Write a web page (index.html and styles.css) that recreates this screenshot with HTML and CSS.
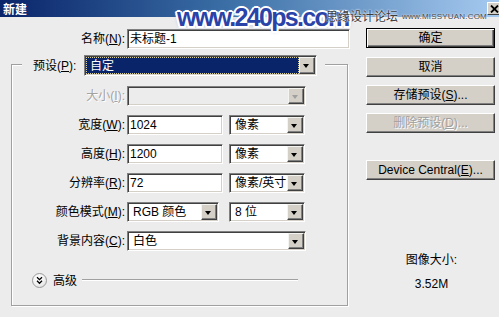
FILE: index.html
```html
<!DOCTYPE html>
<html lang="zh-CN">
<head>
<meta charset="utf-8">
<title>新建</title>
<link rel="stylesheet" href="styles.css">
</head>
<body>
<div class="dialog">
  <div class="titlebar">
    <span class="title">新建</span>
    <span class="close"><svg width="9" height="8" viewBox="0 0 9 8"><path d="M1 0.5 L8 7.5 M8 0.5 L1 7.5" stroke="#000" stroke-width="1.8" fill="none"/></svg></span>
  </div>
  <div class="wm wm-main">www.240ps.com</div>
  <div class="wm wm-cn">思缘设计论坛</div>
  <div class="wm wm-en">www.MISSYUAN.COM</div>
  <div class="main">
    <div class="left">
      <div class="name-row">
        <span class="lbl lbl-name">名称(<u>N</u>):</span>
        <div class="field input w-name"><span class="val">未标题-1</span></div>
      </div>
      <div class="group">
        <div class="legend">
          <span class="legend-lbl">预设(<u>P</u>):</span>
          <div class="field select w-preset"><span class="val selected">自定</span><span class="arrow"></span></div>
        </div>
        <div class="row first">
          <span class="lbl disabled">大小(<u>I</u>):</span>
          <div class="field select disabled w-full"><span class="val"></span><span class="arrow"></span></div>
        </div>
        <div class="row">
          <span class="lbl">宽度(<u>W</u>):</span>
          <div class="field input w-num"><span class="val">1024</span></div>
          <div class="field select w-unit"><span class="val">像素</span><span class="arrow"></span></div>
        </div>
        <div class="row">
          <span class="lbl">高度(<u>H</u>):</span>
          <div class="field input w-num"><span class="val">1200</span></div>
          <div class="field select w-unit"><span class="val">像素</span><span class="arrow"></span></div>
        </div>
        <div class="row">
          <span class="lbl">分辨率(<u>R</u>):</span>
          <div class="field input w-num"><span class="val">72</span></div>
          <div class="field select w-unit"><span class="val">像素/英寸</span><span class="arrow"></span></div>
        </div>
        <div class="row">
          <span class="lbl">颜色模式(<u>M</u>):</span>
          <div class="field select w-mode"><span class="val">RGB 颜色</span><span class="arrow"></span></div>
          <div class="field select w-unit w-bits"><span class="val">8 位</span><span class="arrow"></span></div>
        </div>
        <div class="row">
          <span class="lbl">背景内容(<u>C</u>):</span>
          <div class="field select w-full"><span class="val">白色</span><span class="arrow"></span></div>
        </div>
        <div class="adv-row">
          <span class="adv-btn"><svg width="9" height="9" viewBox="0 0 9 9"><path d="M2 1.2 L4.5 3.7 L7 1.2 M2 4.8 L4.5 7.3 L7 4.8" stroke="#000" stroke-width="1.3" fill="none"/></svg></span>
          <span class="adv-lbl">高级</span>
          <span class="adv-line"></span>
        </div>
      </div>
    </div>
    <div class="right">
      <div class="btn default">确定</div>
      <div class="btn">取消</div>
      <div class="btn">存储预设(<u>S</u>)...</div>
      <div class="btn disabled">删除预设(<u>D</u>)...</div>
      <div class="btn btn-dc">Device Central(<u>E</u>)...</div>
      <div class="info">
        <div class="info-line">图像大小:</div>
        <div class="info-line info-val">3.52M</div>
      </div>
    </div>
  </div>
</div>
</body>
</html>
```

FILE: styles.css
```css
html, body {
  margin: 0;
  padding: 0;
  background: #ececec;
}

.dialog {
  position: relative;
  width: 499px;
  height: 317px;
  overflow: hidden;
  background: #ececec;
  font-family: "Liberation Sans", "Noto Sans CJK SC", sans-serif;
  font-size: 12px;
  line-height: 14px;
  color: #000;
}

u { text-decoration: underline; text-underline-offset: 1px; }

/* title bar */
.titlebar {
  height: 17px;
  display: flex;
  align-items: center;
  padding-left: 3px;
  background: linear-gradient(90deg, #0a246a 0%, #3a6ea5 45%, #a6caf0 100%);
}
.title {
  color: #fff;
  font-weight: bold;
  font-family: "Noto Sans CJK SC", sans-serif;
  font-size: 12px;
  line-height: 14px;
}
.close {
  margin-left: auto;
  margin-right: -3px;
  width: 15px;
  height: 13px;
  box-sizing: border-box;
  background: #d4d0c8;
  border: 1px solid;
  border-color: #fff #404040 #404040 #fff;
  display: flex;
  align-items: center;
  justify-content: center;
}

/* watermark */
.wm {
  position: absolute;
  white-space: nowrap;
}
.wm-main {
  left: 177px;
  top: 5px;
  font-family: "Liberation Sans", sans-serif;
  font-weight: bold;
  font-size: 25px;
  line-height: 25px;
  letter-spacing: -1.7px;
  color: #2943a8;
  text-shadow: 2px 0 #fff, -2px 0 #fff, 0 2px #fff, 0 -2px #fff,
    1.5px 1.5px #fff, -1.5px -1.5px #fff, 1.5px -1.5px #fff, -1.5px 1.5px #fff,
    0 0 4px #6f8fd0;
}
.wm-cn {
  left: 326px;
  top: 9px;
  font-family: "Noto Sans CJK SC", sans-serif;
  font-size: 12px;
  line-height: 13px;
  color: #3c3c3c;
  text-shadow: 0 0 2px #fff, 0 0 2px #fff;
}
.wm-en {
  left: 402px;
  top: 12px;
  font-family: "Liberation Sans", sans-serif;
  font-size: 8px;
  line-height: 9px;
  letter-spacing: 0.2px;
  color: #4a4a4a;
  text-shadow: 0 0 2px #fff;
}

/* main area */
.main {
  display: flex;
}
.left {
  width: 366px;
  display: flex;
  flex-direction: column;
}
.right {
  width: 129px;
  display: flex;
  flex-direction: column;
  gap: 8px;
  padding-top: 11px;
}

.name-row {
  margin-top: 12px;
  display: flex;
  align-items: center;
}
.lbl {
  text-align: right;
  white-space: nowrap;
}
.lbl-name { width: 125px; }
.lbl.disabled { color: #a3a3a3; text-shadow: 1px 1px 0 #fff; }

/* fields */
.field {
  box-sizing: border-box;
  height: 20px;
  margin-left: 2px;
  border: 1px solid;
  border-color: #808080 #fff #fff #808080;
  box-shadow: inset 1px 1px 0 #404040, inset -1px -1px 0 #d4d0c8;
  background: #fff;
  display: flex;
  align-items: stretch;
  white-space: nowrap;
}
.field .val {
  flex: 1;
  display: flex;
  align-items: center;
  overflow: hidden;
}
.input .val { padding-left: 2px; }
.select .val { padding-left: 5px; }

.w-name { width: 223px; }
.w-preset { width: 233px; margin-left: 0; }
.w-full { width: 179px; }
.w-num { width: 96px; }
.w-unit { width: 76px; margin-left: 6px; }
.w-mode { width: 92px; }
.w-bits { margin-left: 10px; }

.val.selected {
  margin: 1px 0 1px 1px;
  padding-left: 4px;
  background: #0a246a;
  color: #fff;
  outline: 1px dotted #d8d0a0;
  outline-offset: -1px;
}

.arrow {
  position: relative;
  width: 16px;
  margin: 1px 1px 1px 0;
  box-sizing: border-box;
  background: #d4d0c8;
  border: 1px solid;
  border-color: #f4f4f0 #404040 #404040 #f4f4f0;
  box-shadow: inset -1px -1px 0 #808080;
}
.arrow::after {
  content: "";
  position: absolute;
  left: 3px;
  top: 6px;
  border-style: solid;
  border-width: 4px 3.5px 0 3.5px;
  border-color: #000 transparent transparent transparent;
}
.select.disabled { background: #ececec; }
.select.disabled .arrow::after { border-top-color: #a0a0a0; }

/* group box */
.group {
  margin-top: 15px;
  margin-left: 11px;
  width: 337px;
  height: 242px;
  box-sizing: border-box;
  border: 1px solid #a0a0a0;
  box-shadow: inset 1px 1px 0 #fff, 1px 1px 0 #fff;
  display: flex;
  flex-direction: column;
}
.legend {
  align-self: flex-start;
  margin-top: -10px;
  margin-left: 10px;
  padding: 0 8px 0 11px;
  background: #ececec;
  display: flex;
  align-items: center;
  height: 21px;
}
.legend .field { height: 21px; }
.legend-lbl { width: 51px; white-space: nowrap; }

.row {
  display: flex;
  align-items: center;
  margin-top: 9px;
}
.row.first { margin-top: 10px; }
.row .lbl { width: 113px; }

.adv-row {
  margin-top: 22px;
  margin-left: 20px;
  margin-right: 49px;
  height: 15px;
  display: flex;
  align-items: center;
}
.adv-btn {
  width: 15px;
  height: 15px;
  box-sizing: border-box;
  border-radius: 50%;
  border: 1px solid #9a9a9a;
  background: radial-gradient(circle at 40% 35%, #ffffff 0%, #f2f2f2 50%, #d6d6d6 100%);
  display: flex;
  align-items: center;
  justify-content: center;
}
.adv-lbl { margin-left: 6px; }
.adv-line {
  flex: 1;
  margin-left: 5px;
  height: 1px;
  background: #a0a0a0;
  box-shadow: 0 1px 0 #fff;
  margin-top: -3px;
}

/* buttons */
.btn {
  height: 20px;
  box-sizing: border-box;
  background: #d4d0c8;
  border: 1px solid;
  border-color: #fff #404040 #404040 #fff;
  box-shadow: inset -1px -1px 0 #808080;
  display: flex;
  align-items: center;
  justify-content: center;
  white-space: nowrap;
}
.btn.default {
  border: 1px solid #000;
  box-shadow: inset 1px 1px 0 #fff, inset -1px -1px 0 #404040, inset -2px -2px 0 #808080;
}
.right .btn:nth-child(2) { margin-top: 1px; }
.btn.disabled {
  color: #a0a0a0;
  text-shadow: 1px 1px 0 #fff;
}
.btn-dc { margin-top: 19px; }

.info {
  margin-top: 65px;
  display: flex;
  flex-direction: column;
  align-items: center;
  gap: 10px;
  padding-left: 2px;
}
.info-line { line-height: 14px; }
```
